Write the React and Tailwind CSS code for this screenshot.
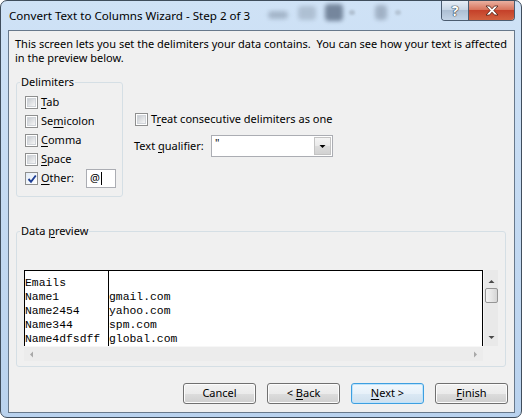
import React from "react";

const ui = "font-['Noto_Sans','Open_Sans',sans-serif]";

function U({ children }) {
  return <span className="underline decoration-1 underline-offset-[2px]">{children}</span>;
}

function CheckBox({ checked }) {
  return (
    <span className="flex size-[13px] shrink-0 items-center justify-center border border-[#8e8f8f] bg-white">
      {checked ? (
        <span className="flex size-[11px] items-center justify-center bg-gradient-to-br from-[#e3ecf7] to-white">
          <svg width="10" height="10" viewBox="0 0 10 10">
            <path d="M1.5 5 L4 7.8 L8.8 1.5" fill="none" stroke="#1f3f94" strokeWidth="1.9" />
          </svg>
        </span>
      ) : (
        <span className="size-[9px] border border-[#d0d4d9] bg-gradient-to-br from-[#c8ccd1] to-[#f6f6f6]" />
      )}
    </span>
  );
}

function Btn({ children, focused }) {
  return (
    <button
      className={
        focused
          ? "h-[21px] w-[73px] rounded-[3px] border border-[#3d9fe0] bg-[linear-gradient(#f1f8fd_0%,#e7f1f9_50%,#dbe9f4_51%,#cfe0ee_100%)] text-[11px] shadow-[inset_0_0_0_1px_#bfe3fb]"
          : "h-[21px] w-[73px] rounded-[3px] border border-[#707070] bg-[linear-gradient(#f2f2f2_0%,#ebebeb_50%,#dddddd_51%,#cfcfcf_100%)] text-[11px] shadow-[inset_0_0_0_1px_#fcfcfc]"
      }
    >
      {children}
    </button>
  );
}

function Tri({ dir, color }) {
  const d = {
    up: "M0.5 4 L3.5 1 L6.5 4 Z",
    down: "M0.5 1 L3.5 4 L6.5 1 Z",
    left: "M4 0.5 L1 3.5 L4 6.5 Z",
    right: "M1 0.5 L4 3.5 L1 6.5 Z",
  }[dir];
  const vertical = dir === "up" || dir === "down";
  return (
    <svg width={vertical ? 7 : 5} height={vertical ? 5 : 7} viewBox={vertical ? "0 0 7 5" : "0 0 5 7"}>
      <path d={d} fill={color} />
    </svg>
  );
}

const rows = [
  ["Emails", ""],
  ["Name1", "gmail.com"],
  ["Name2454", "yahoo.com"],
  ["Name344", "spm.com"],
  ["Name4dfsdff", "global.com"],
];

export default function App() {
  return (
    <div className={`${ui} h-[418px] w-[522px] overflow-hidden rounded-[7px] border border-[#3f4d5c] bg-gradient-to-b from-[#cfe2f6] to-[#b9d2ee] text-black`}>
      {/* Title bar */}
      <div className="flex h-[29px] items-start">
        <span className="mt-[6px] ml-[8px] w-[259px] text-[11.6px] leading-[18px]">
          Convert Text to Columns Wizard - Step 2 of 3
        </span>
        <div className="flex items-center pt-[3px] opacity-80">
          <span className="mt-[5px] h-[8px] w-[20px] rounded-full bg-[#9aabbf] blur-[2px]" />
          <span className="ml-[10px] h-[14px] w-[18px] rounded-sm bg-[#a7b8cb] blur-[2px]" />
          <span className="ml-[9px] h-[17px] w-[18px] rounded-sm bg-[#5f7087] blur-[2px]" />
          <span className="ml-[6px] h-[5px] w-[6px] rounded-full bg-[#a9b8c8] blur-[1px]" />
          <span className="ml-[20px] h-[15px] w-[12px] rounded-sm bg-[#96a6ba] blur-[2px]" />
          <span className="ml-[8px] h-[5px] w-[6px] rounded-full bg-[#aebdcd] blur-[1px]" />
        </div>
        <div className="ml-auto mr-[6px] flex h-[20px] overflow-hidden rounded-b-[4px] border border-t-0 border-[#4b5c70]">
          <div className="flex w-[27px] items-center justify-center border-r border-[#4b5c70] bg-[linear-gradient(#e6eef7_0%,#c9d7e6_45%,#adbfd3_50%,#c3d4e6_100%)]">
            <span className="text-[14px] font-bold leading-none text-white [text-shadow:0_0_1px_#26313d,0_0_1px_#26313d,0_0_1px_#26313d]">
              ?
            </span>
          </div>
          <div className="flex w-[45px] items-center justify-center bg-[linear-gradient(#eab0a0_0%,#d8755d_45%,#c5412a_50%,#d2613f_100%)]">
            <svg width="14" height="11" viewBox="0 0 14 11">
              <path
                d="M1 1 H4.5 L7 3.8 L9.5 1 H13 L8.8 5.5 L13 10 H9.5 L7 7.2 L4.5 10 H1 L5.2 5.5 Z"
                fill="white"
                stroke="#4a1d12"
                strokeWidth="0.8"
              />
            </svg>
          </div>
        </div>
      </div>

      {/* Client area */}
      <div className="ml-[7px] h-[383px] w-[507px] border border-[#67788b] bg-[#f0f0f0] text-[11px]">
        <p className="mt-[6px] ml-[6px] whitespace-pre leading-[14px]">
          {"This screen lets you set the delimiters your data contains.  You can see how your text is affected"}
          <br />
          {"in the preview below."}
        </p>

        <div className="mt-[9px] ml-[7px] flex items-start">
          <fieldset className="w-[107px] rounded-[3px] border border-[#d5dfe5] pl-[8px] pr-[6px] pb-[8px]">
            <legend className="ml-[-5px] px-[1px] leading-[16px]">Delimiters</legend>
            <div className="flex flex-col pt-[3px]">
              <div className="flex h-[19px] items-center gap-[3px]">
                <CheckBox />
                <span><U>T</U>ab</span>
              </div>
              <div className="flex h-[19px] items-center gap-[3px]">
                <CheckBox />
                <span>Se<U>m</U>icolon</span>
              </div>
              <div className="flex h-[19px] items-center gap-[3px]">
                <CheckBox />
                <span><U>C</U>omma</span>
              </div>
              <div className="flex h-[19px] items-center gap-[3px]">
                <CheckBox />
                <span><U>S</U>pace</span>
              </div>
              <div className="flex h-[19px] items-center gap-[3px]">
                <CheckBox checked />
                <span className="w-[41px]"><U>O</U>ther:</span>
                <div className="ml-[1px] flex h-[19px] w-[30px] items-center border border-[#abadb3] bg-white pl-[3px]">
                  <span>@</span>
                  <span className="ml-[1px] h-[13px] w-px bg-black" />
                </div>
              </div>
            </div>
          </fieldset>

          <div className="ml-[12px] flex flex-col">
            <div className="mt-[36px] flex h-[19px] items-center gap-[3px]">
              <CheckBox />
              <span>T<U>r</U>eat consecutive delimiters as one</span>
            </div>
            <div className="mt-[6px] flex h-[22px] items-center">
              <span className="ml-[-1px] w-[77px]">Text <U>q</U>ualifier:</span>
              <div className="flex h-[22px] w-[122px] border border-[#abadb3] bg-white">
                <span className="flex-1 pl-[3px] leading-[14px]">"</span>
                <div className="m-px flex w-[17px] items-center justify-center border border-[#c3c3c3] bg-[linear-gradient(#f4f4f4_0%,#e9e9e9_50%,#dcdcdc_51%,#d2d2d2_100%)]">
                  <Tri dir="down" color="#000" />
                </div>
              </div>
            </div>
          </div>
        </div>

        <fieldset className="mt-[26px] ml-[7px] w-[490px] rounded-[3px] border border-[#d5dfe5] px-[7px] pb-[5px]">
          <legend className="ml-[-4px] px-[1px] leading-[16px]">
            Data <U>p</U>review
          </legend>
          <div className="mt-[31px] flex w-[474px]">
            <div className="flex w-[459px] flex-col">
              <div className="flex h-[76px] border-x border-t border-black bg-white font-['Liberation_Mono','Courier_New',monospace] text-[11.4px] leading-[14px]">
                <div className="w-[84px] border-r border-black pt-[5px]">
                  {rows.map(([a]) => (
                    <div key={a} className="h-[14px]">{a}</div>
                  ))}
                </div>
                <div className="flex-1 pt-[5px]">
                  {rows.map(([a, b]) => (
                    <div key={a} className="h-[14px]">{b}</div>
                  ))}
                </div>
              </div>
              <div className="flex h-[15px] items-center justify-between border-t border-[#f7f7f7] bg-[#ececec] px-[5px]">
                <Tri dir="left" color="#a8a8a8" />
                <Tri dir="right" color="#a8a8a8" />
              </div>
            </div>
            <div className="flex w-[15px] flex-col">
              <div className="flex h-[76px] flex-col items-center border-l border-[#f7f7f7] bg-[#e9e9e9]">
                <div className="mt-[9px] flex">
                  <Tri dir="up" color="#4a4a4a" />
                </div>
                <div className="mt-[4px] h-[15px] w-[13px] rounded-[2px] border border-[#959595] bg-[linear-gradient(90deg,#f5f5f5,#e6e6e6_50%,#d5d5d5)]" />
                <div className="mt-auto mb-[6px] flex">
                  <Tri dir="down" color="#4a4a4a" />
                </div>
              </div>
              <div className="h-[15px] bg-[#f0f0f0]" />
            </div>
          </div>
        </fieldset>

        <div className="mt-[16px] mr-[6px] flex justify-end gap-[11px]">
          <Btn>Cancel</Btn>
          <Btn>
            {"< "}
            <U>B</U>ack
          </Btn>
          <Btn focused>
            <U>N</U>ext {">"}
          </Btn>
          <Btn>
            <U>F</U>inish
          </Btn>
        </div>
      </div>
    </div>
  );
}
